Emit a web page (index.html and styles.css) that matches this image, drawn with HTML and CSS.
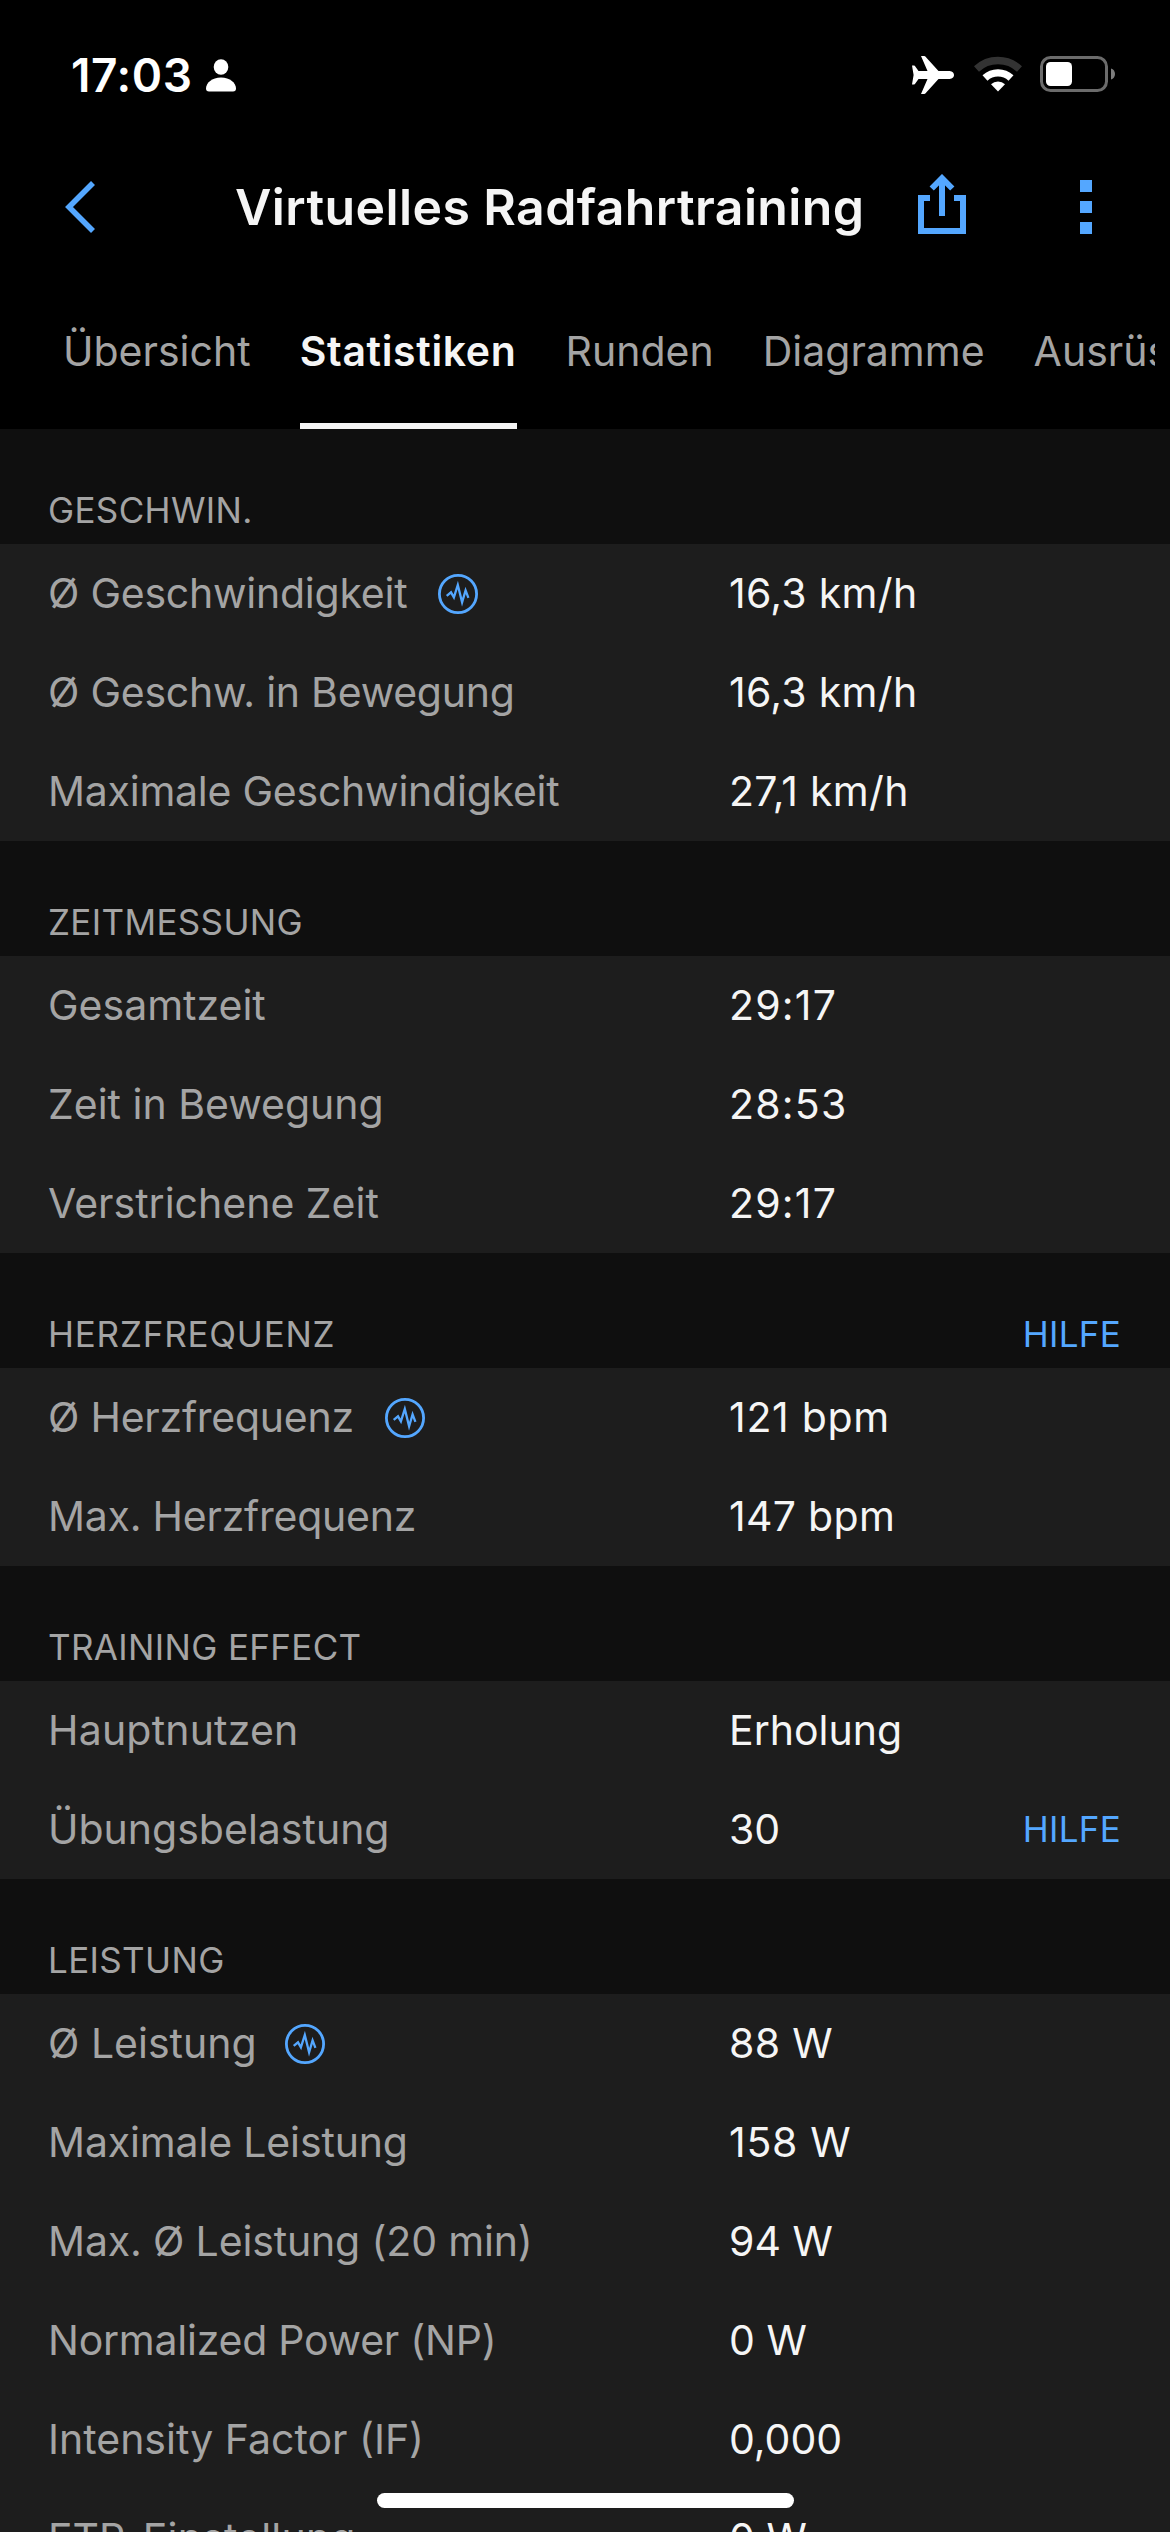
FILE: index.html
```html
<!DOCTYPE html>
<html lang="de">
<head>
<meta charset="utf-8">
<title>Virtuelles Radfahrtraining</title>
<link rel="stylesheet" href="styles.css">
</head>
<body>
<svg class="sprite" aria-hidden="true">
  <symbol id="pulse" viewBox="0 0 40 40">
    <circle cx="20" cy="20" r="18.6" fill="none" stroke="currentColor" stroke-width="2.8"/>
    <path d="M8.7 21.8L13 18.3l2.9 5L19.8 11l4.3 17.4 3.5-12 2.8 7.4" fill="none" stroke="currentColor" stroke-width="2.3" stroke-miterlimit="8"/>
  </symbol>
</svg>
<div class="screen">
  <header class="top">
    <div class="status">
      <span class="clock">17:03</span>
      <svg class="person" width="30" height="33" viewBox="0 0 30 33" fill="#fff"><ellipse cx="15" cy="8" rx="7.3" ry="7.8"/><path d="M3 32.5C1 32.500 0 31.500 0 29.500 0 24 6 18.500 15 18.500S30 24 30 29.500c0 2-1 3-3 3z"/></svg>
      <svg class="plane" width="42" height="38" viewBox="0 0 42 38" fill="#fff"><path d="M42 19c0-2.600-2.500-4-5.500-4H26.500L14 1.200C13.400.4 12.800 0 12 0H9l6.500 15H6.500L3.300 10.500C3 10 2.500 9.600 2 9.600H0L1.600 19 0 28.400H2c.5 0 1-.4 1.300-.9L6.500 23h9L9 38h3c.8 0 1.400-.4 2-1.200L26.500 23h10c3 0 5.500-1.400 5.500-4z"/></svg>
      <svg class="wifi" width="48" height="36" viewBox="0 0 48 36"><g fill="none" stroke-width="7.300"><path d="M2.500 13A31.500 31.500 0 0 1 45.500 13" stroke="#333"/><path d="M11 22A19 19 0 0 1 37 22" stroke="#fff"/></g><path d="M24 35.500L17 28.300a10 10 0 0 1 14 0z" fill="#fff"/></svg>
      <svg class="battery" width="75" height="36" viewBox="0 0 75 36"><rect x="1.500" y="1.500" width="65" height="33" rx="9" fill="none" stroke="#6b6b6b" stroke-width="3"/><rect x="6" y="6" width="26" height="24" rx="4.500" fill="#fff"/><path d="M71 12.500c2.600.8 4 3 4 5.500s-1.400 4.700-4 5.500z" fill="#7d7d7d"/></svg>
    </div>
    <div class="nav">
      <svg class="back" width="31" height="52" viewBox="0 0 31 52"><path d="M28 2L4 26l24 24" fill="none" stroke="currentColor" stroke-width="5.600"/></svg>
      <h1>Virtuelles Radfahrtraining</h1>
      <svg class="share" width="48" height="60" viewBox="0 0 48 60"><path d="M12 24H3v33h42V24h-9M24 42V5M13.700 14.500L24 4.200l10.300 10.300" fill="none" stroke="currentColor" stroke-width="6"/></svg>
      <svg class="more" width="12" height="54" viewBox="0 0 12 54" fill="currentColor"><path d="M0 0h12v12H0zM0 21h12v12H0zM0 42h12v12H0z"/></svg>
    </div>
    <nav class="tabs">
      <span class="tab">Übersicht</span>
      <span class="tab active">Statistiken</span>
      <span class="tab">Runden</span>
      <span class="tab">Diagramme</span>
      <span class="tab">Ausrüstung</span>
    </nav>
  </header>
  <main>
    <section>
      <h2 class="wide">GESCHWIN.</h2>
      <div class="row"><span class="label tight">Ø Geschwindigkeit<svg class="pulse"><use href="#pulse"/></svg></span><span class="value">16,3 km/h</span></div>
      <div class="row"><span class="label tight">Ø Geschw. in Bewegung</span><span class="value">16,3 km/h</span></div>
      <div class="row"><span class="label tight">Maximale Geschwindigkeit</span><span class="value">27,1 km/h</span></div>
    </section>
    <section>
      <h2 class="wide">ZEITMESSUNG</h2>
      <div class="row"><span class="label">Gesamtzeit</span><span class="value time">29:17</span></div>
      <div class="row"><span class="label">Zeit in Bewegung</span><span class="value time">28:53</span></div>
      <div class="row"><span class="label">Verstrichene Zeit</span><span class="value time">29:17</span></div>
    </section>
    <section>
      <h2 class="wider">HERZFREQUENZ<a class="help">HILFE</a></h2>
      <div class="row"><span class="label tight">Ø Herzfrequenz<svg class="pulse"><use href="#pulse"/></svg></span><span class="value loose">121 bpm</span></div>
      <div class="row"><span class="label tight">Max. Herzfrequenz</span><span class="value">147 bpm</span></div>
    </section>
    <section>
      <h2 class="wide">TRAINING EFFECT</h2>
      <div class="row"><span class="label medium">Hauptnutzen</span><span class="value word">Erholung</span></div>
      <div class="row"><span class="label">Übungsbelastung</span><span class="value word">30</span><a class="help">HILFE</a></div>
    </section>
    <section>
      <h2 class="wide">LEISTUNG</h2>
      <div class="row"><span class="label">Ø Leistung<svg class="pulse"><use href="#pulse"/></svg></span><span class="value">88 W</span></div>
      <div class="row"><span class="label snug">Maximale Leistung</span><span class="value loose">158 W</span></div>
      <div class="row"><span class="label snug">Max. Ø Leistung (20 min)</span><span class="value word">94 W</span></div>
      <div class="row"><span class="label tight">Normalized Power (NP)</span><span class="value word">0 W</span></div>
      <div class="row"><span class="label">Intensity Factor (IF)</span><span class="value word">0,000</span></div>
      <div class="row"><span class="label medium">FTP-Einstellung</span><span class="value word">0 W</span></div>
    </section>
  </main>
  <div class="home-indicator"></div>
</div>
</body>
</html>
```
FILE: styles.css
```css
* { box-sizing: border-box; }
html, body { margin: 0; background: #000; }
body { font-family: Inter, "Liberation Sans", sans-serif; color: #f5f5f5; }
svg { display: block; flex: none; }
.sprite { position: absolute; width: 0; height: 0; }
.screen {
  position: relative;
  width: 1170px;
  height: 2532px;
  overflow: hidden;
  background: #0f0f0f;
}
.top { height: 429px; background: #000; }

.status {
  display: flex;
  align-items: center;
  height: 150px;
  padding: 0 55px 0 71px;
}
.clock { width: 135px; font-size: 46px; font-weight: 600; letter-spacing: 0.6px; color: #fff; }
.plane { margin-left: auto; margin-right: 20px; }
.wifi { margin-right: 18px; margin-top: -2px; }
.battery { margin-top: -2px; }

.nav {
  display: flex;
  align-items: center;
  height: 114px;
  padding: 0 78px 0 65px;
  color: #54a7ff;
}
.nav h1 {
  margin: 0 0 0 139px;
  width: 683px;
  font-size: 50px;
  font-weight: 600;
  letter-spacing: 0.4px;
  white-space: nowrap;
  color: #f5f5f5;
}
.share { margin-top: -6px; }
.more { margin-left: auto; }

.tabs {
  display: flex;
  gap: 49px;
  width: 1155px;
  height: 165px;
  padding-left: 63px;
  overflow: hidden;
  font-size: 41px;
  color: #a4a4a4;
}
.tab { display: flex; align-items: center; flex: none; padding-top: 9px; }
.tab.active {
  justify-content: center;
  width: 217px;
  font-weight: 600;
  letter-spacing: 0.65px;
  color: #f5f5f5;
  box-shadow: inset 0 -6px #f5f5f5;
}

h2 {
  display: flex;
  align-items: center;
  justify-content: space-between;
  height: 115px;
  margin: 0;
  padding: 47px 49px 0 48px;
  font-size: 35px;
  font-weight: 400;
  color: #a4a4a4;
}
h2.wide { letter-spacing: 0.35px; }
h2.wider { letter-spacing: 0.78px; }
.help { font-size: 35px; letter-spacing: 0.28px; color: #54a7ff; }

.row {
  display: grid;
  grid-template-columns: 681px 1fr auto;
  align-items: center;
  height: 99px;
  padding: 0 49px 2px 48px;
  font-size: 41px;
  white-space: nowrap;
  background: #1d1d1d;
}
.label { display: flex; align-items: center; gap: 28px; color: #a4a4a4; }
.label.tight { gap: 31px; letter-spacing: -0.24px; }
.label.snug { letter-spacing: -0.15px; }
.label.medium { letter-spacing: 0.2px; }
.value { letter-spacing: 0.3px; }
.value.loose { letter-spacing: 0.7px; }
.value.time { letter-spacing: 1.2px; }
.value.word { letter-spacing: 0; }
.pulse { width: 40px; height: 40px; margin-top: 2px; color: #54a7ff; }

.home-indicator {
  position: absolute;
  left: 377px;
  bottom: 24px;
  width: 417px;
  height: 15px;
  border-radius: 8px;
  background: #fff;
}
```
